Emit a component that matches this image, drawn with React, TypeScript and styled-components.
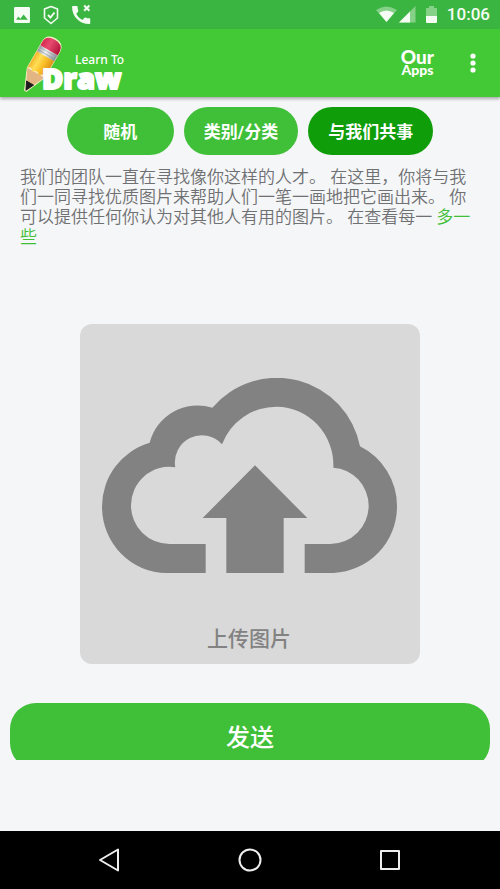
import React from "react";
import styled, { createGlobalStyle } from "styled-components";

const GlobalStyle = createGlobalStyle`
  *, *::before, *::after { box-sizing: border-box; }
  body {
    margin: 0;
    background: #f5f6f8;
    font-family: Roboto, "Noto Sans CJK SC", sans-serif;
  }
  button { font-family: inherit; border: 0; padding: 0; background: none; cursor: pointer; }
`;

const Screen = styled.div`
  min-height: 100vh;
  display: flex;
  flex-direction: column;
`;

const StatusBar = styled.div`
  display: flex;
  align-items: center;
  justify-content: space-between;
  height: 29px;
  padding: 0 10px 0 13px;
  background: #3bb541;
  color: #f4fcf3;
`;

const StatusGroup = styled.div<{ $gap: number }>`
  display: flex;
  align-items: center;
  gap: ${({ $gap }) => $gap}px;
`;

const Clock = styled.time`
  font-size: 17px;
  font-weight: 500;
  line-height: 29px;
`;

const Header = styled.header`
  display: flex;
  align-items: center;
  height: 68px;
  padding: 0 17px 0 20px;
  background: #43c935;
  box-shadow: 0 2px 3px rgba(0, 0, 0, 0.3);
`;

const Logo = styled.svg`
  display: block;
  margin-right: auto;
`;

const AppsButton = styled.button`
  display: flex;
  flex-direction: column;
  align-items: center;
  padding-bottom: 2px;
  color: #fff;
  font-family: Lato, sans-serif;
  font-weight: 900;
`;

const AppsLine = styled.span<{ $size: number; $height: number }>`
  font-size: ${({ $size }) => $size}px;
  line-height: ${({ $height }) => $height}px;
`;

const MenuButton = styled.button`
  display: flex;
  justify-content: center;
  width: 20px;
  margin-left: 29px;
`;

const Main = styled.main`
  flex: 1;
  display: flex;
  flex-direction: column;
  padding: 10px 10px 0;
`;

const Tabs = styled.nav`
  display: flex;
  justify-content: center;
  gap: 10px;
`;

const Tab = styled.button<{ $active?: boolean }>`
  min-width: 107px;
  height: 48px;
  padding: 0 20px 1px;
  border-radius: 24px;
  background: ${({ $active }) => ($active ? "#109d0a" : "#40bf38")};
  color: #fff;
  font-size: 17px;
  font-weight: 700;
`;

const Intro = styled.p`
  margin: 12px 10px 0;
  color: #6f7072;
  font-size: 17px;
  font-weight: 350;
  line-height: 20px;
`;

const MoreLink = styled.a`
  color: #40bf38;
  text-decoration: none;
`;

const UploadCard = styled.button`
  display: flex;
  flex-direction: column;
  align-items: center;
  align-self: center;
  width: 340px;
  margin-top: 77px;
  padding: 54px 21px 9px 19px;
  border-radius: 12px;
  background: #d9d9d9;
  color: #828282;
`;

const UploadLabel = styled.span`
  margin-top: 50px;
  font-size: 21px;
  font-weight: 500;
  line-height: 32px;
`;

const SendClip = styled.div`
  height: 57px;
  margin-top: 39px;
  overflow: hidden;
`;

const SendButton = styled.button`
  width: 100%;
  height: 66px;
  padding-bottom: 2px;
  border-radius: 26px;
  background: #40bf38;
  color: #fff;
  font-size: 24px;
  font-weight: 500;
`;

const NavBar = styled.nav`
  display: grid;
  grid-template-columns: repeat(3, 140px);
  justify-content: center;
  align-items: center;
  height: 58px;
  background: #000;
`;

const NavButton = styled.button`
  display: flex;
  justify-content: center;
`;

const LogoMark = () => (
  <Logo width="112" height="62" viewBox="20 31 112 62" role="img" aria-label="Learn To Draw">
    <defs>
      <linearGradient id="wood" x1="0" y1="0" x2="1" y2="0">
        <stop offset="0" stopColor="#f4b52c" />
        <stop offset="0.3" stopColor="#ffdf55" />
        <stop offset="0.6" stopColor="#fbc02b" />
        <stop offset="1" stopColor="#dd9217" />
      </linearGradient>
      <linearGradient id="metal" x1="0" y1="0" x2="1" y2="0">
        <stop offset="0" stopColor="#9aa1a8" />
        <stop offset="0.4" stopColor="#f3f5f7" />
        <stop offset="1" stopColor="#8b9198" />
      </linearGradient>
      <linearGradient id="rubber" x1="0" y1="0" x2="1" y2="0">
        <stop offset="0" stopColor="#d72a50" />
        <stop offset="0.4" stopColor="#e64a6e" />
        <stop offset="1" stopColor="#b3123a" />
      </linearGradient>
    </defs>
    <g transform="translate(26 89) rotate(30)">
      <path d="M-1 1L-10 -20V-50Q-10 -59 0 -59Q10 -59 10 -50V-20L1 1Z" fill="#f8f0c8" stroke="#f8f0c8" strokeWidth="1" strokeLinejoin="round" />
      <path d="M0 0L-10 -20H10Z" fill="#e3b583" />
      <path d="M0 0L-4 -8H4Z" fill="#1d1d1d" stroke="#1d1d1d" strokeLinejoin="round" />
      <path d="M-10 -40H10V-20Q7 -24 4 -19Q0 -24 -4 -19Q-7 -24 -10 -20Z" fill="url(#wood)" />
      <rect x="-10" y="-46" width="20" height="7" fill="url(#metal)" />
      <path d="M-10 -44H10M-10 -41H10" stroke="#8a9096" strokeWidth="1" opacity="0.5" />
      <path d="M-10 -46V-50Q-10 -58 0 -58Q10 -58 10 -50V-46Z" fill="url(#rubber)" />
    </g>
    <text x="75" y="63" fill="#fff" fontFamily="Noto Sans, sans-serif" fontSize="12" fontWeight="500">Learn To</text>
    <text x="42" y="88" fill="#fff" stroke="#fff" strokeWidth="2" strokeLinejoin="round" fontFamily="Open Sans, sans-serif" fontSize="29" fontWeight="800">Draw</text>
  </Logo>
);

const CloudUpload = () => (
  <svg width="295" height="195" viewBox="96 204 885 585" fill="currentColor" aria-hidden="true">
    <path d="M407 789H290A194 199 0 0 1 96 590A200 200 0 0 1 239 398A148 148 0 0 1 427 293A254 254 0 0 1 870 409A201 201 0 0 1 981 589A200 200 0 0 1 790 789H704V702H781A115 115 0 0 0 896 587A113 115 0 0 0 790 473A171 176 0 0 0 620 290A174 174 0 0 0 456 403A81 81 0 0 0 316 472A115 115 0 0 0 183 587A115 115 0 0 0 298 702H407Z" />
    <path d="M555 466L712 624H641V789H469V624H398Z" />
  </svg>
);

export default function App() {
  return (
    <Screen>
      <GlobalStyle />
      <StatusBar>
        <StatusGroup $gap={11}>
          <svg width="18" height="18" viewBox="0 0 17 17" aria-hidden="true">
            <path fill="currentColor" fillRule="evenodd" d="M2 1h13q1 0 1 1v13q0 1-1 1H2q-1 0-1-1V2q0-1 1-1zM3 13h11L10 8l-3 4-2-2z" />
          </svg>
          <svg width="18" height="20" viewBox="0 0 18 20" fill="none" stroke="currentColor" strokeWidth="1.6" aria-hidden="true">
            <path d="M9 1.5L15.5 4V13L9 18.500L2.500 13V4Z" strokeLinejoin="round" />
            <path d="M6 10l2.500 2.500 4-5" strokeWidth="2" />
          </svg>
          <svg width="20" height="21" viewBox="0 0 19 20" aria-hidden="true">
            <path fill="currentColor" d="M5 9.200c1.400 2.700 3.200 4.600 5.900 6l2-2c.400-.400.900-.400 1.300-.200 1 .400 2 .500 3.100.600.600 0 1 .400 1 1v3.400c0 .600-.400 1-1 1C8.200 19 1 11.800 1 3c0-.600.400-1 1-1h3.300c.600 0 1 .400 1 1 0 1.200.200 2.200.600 3.300.100.400 0 .800-.200 1z" />
            <path stroke="currentColor" strokeWidth="2" d="M12.500 1.500l5 5M17.500 1.500l-5 5" />
          </svg>
        </StatusGroup>
        <StatusGroup $gap={10}>
          <StatusGroup $gap={2}>
            <svg width="21" height="17" viewBox="0 0 21 17" fill="currentColor" aria-hidden="true">
              <path opacity="0.4" d="M10.500 16L0 4Q10.500-3 21 4Z" />
              <path d="M10.500 16L3 7Q10.500 2 18 7Z" />
            </svg>
            <svg width="17" height="17" viewBox="0 0 17 17" fill="currentColor" aria-hidden="true">
              <path opacity="0.4" d="M0 16.500L16.500 0V16.500Z" />
              <path d="M0 16.500L11 5.500V16.500Z" />
            </svg>
          </StatusGroup>
          <svg width="11" height="18" viewBox="0 0 11 18" fill="currentColor" aria-hidden="true">
            <path opacity="0.4" d="M0 2h3V0h5v2h3v8H0z" />
            <path d="M0 10h11v6q0 1-1 1H1q-1 0-1-1z" />
          </svg>
          <Clock>10:06</Clock>
        </StatusGroup>
      </StatusBar>
      <Header>
        <LogoMark />
        <AppsButton type="button">
          <AppsLine $size={19} $height={14}>Our</AppsLine>
          <AppsLine $size={14} $height={11}>Apps</AppsLine>
        </AppsButton>
        <MenuButton type="button" aria-label="更多选项">
          <svg width="6" height="20" viewBox="0 0 6 20" fill="#fff" aria-hidden="true">
            <circle cx="3" cy="3" r="2.600" />
            <circle cx="3" cy="10" r="2.600" />
            <circle cx="3" cy="17" r="2.600" />
          </svg>
        </MenuButton>
      </Header>
      <Main>
        <Tabs>
          <Tab type="button">随机</Tab>
          <Tab type="button">类别/分类</Tab>
          <Tab type="button" $active aria-current="page">与我们共事</Tab>
        </Tabs>
        <Intro>
          我们的团队一直在寻找像你这样的人才。 在这里，你将与我们一同寻找优质图片来帮助人们一笔一画地把它画出来。 你可以提供任何你认为对其他人有用的图片。 在查看每一 <MoreLink href="#more">多一些</MoreLink>
        </Intro>
        <UploadCard type="button">
          <CloudUpload />
          <UploadLabel>上传图片</UploadLabel>
        </UploadCard>
        <SendClip>
          <SendButton type="button">发送</SendButton>
        </SendClip>
      </Main>
      <NavBar>
        <NavButton type="button" aria-label="返回">
          <svg width="24" height="24" viewBox="0 0 24 24" fill="none" stroke="#eee" strokeWidth="2" strokeLinejoin="round" aria-hidden="true">
            <path d="M20 1.500V22.500L2 12Z" />
          </svg>
        </NavButton>
        <NavButton type="button" aria-label="主屏幕">
          <svg width="24" height="24" viewBox="0 0 24 24" fill="none" stroke="#eee" strokeWidth="2" aria-hidden="true">
            <circle cx="12" cy="12" r="10.500" />
          </svg>
        </NavButton>
        <NavButton type="button" aria-label="最近任务">
          <svg width="24" height="24" viewBox="0 0 24 24" fill="none" stroke="#eee" strokeWidth="2" strokeLinejoin="round" aria-hidden="true">
            <rect x="3" y="3" width="18" height="18" />
          </svg>
        </NavButton>
      </NavBar>
    </Screen>
  );
}
